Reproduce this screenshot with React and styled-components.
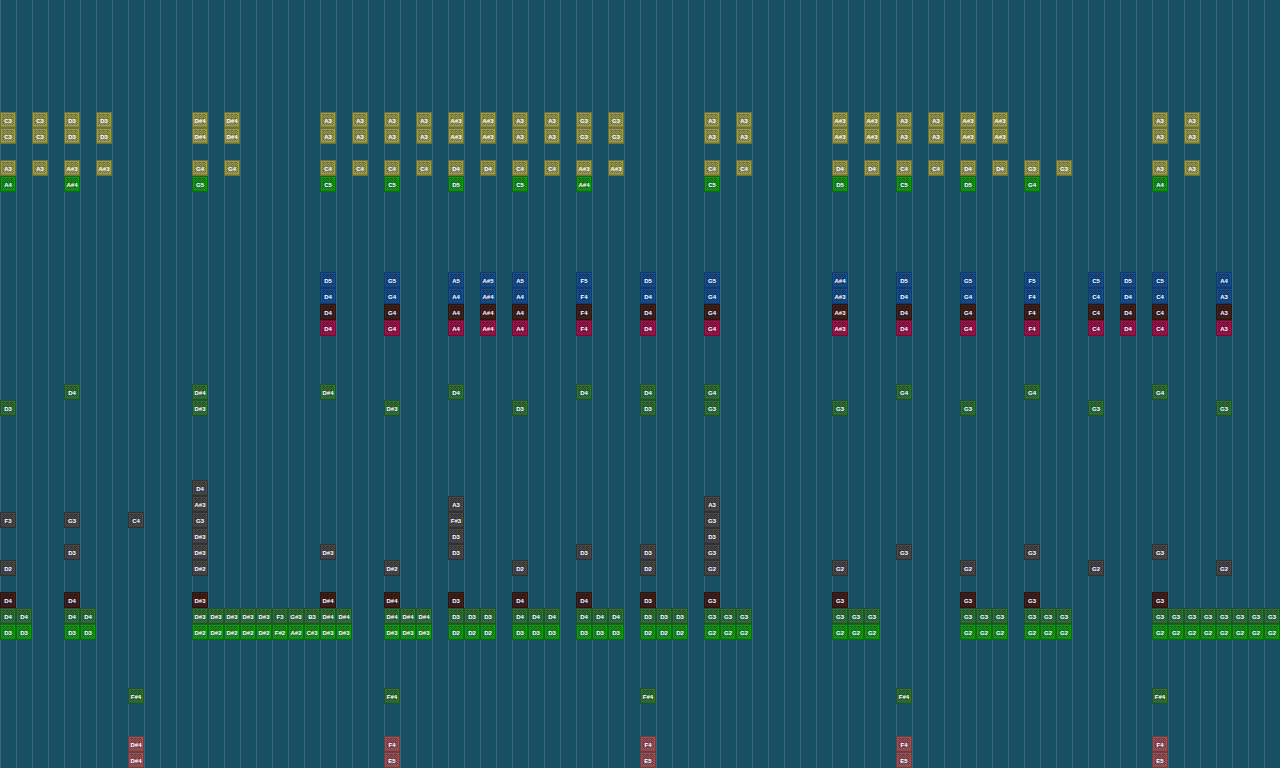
import React from 'react';
import styled, { createGlobalStyle } from 'styled-components';

const GlobalStyle = createGlobalStyle`
  * {
    box-sizing: border-box;
  }

  body {
    margin: 0;
    background: #174f63;
    overflow: hidden;
  }
`;

const Roll = styled.main`
  min-height: 100vh;
  background: repeating-linear-gradient(
    to right,
    #3a687b 0 1px,
    #174f63 1px 16px
  );
`;

const Lane = styled.div`
  display: grid;
  grid-template-columns: repeat(auto-fill, 16px);
  height: 16px;
`;

const Note = styled.span`
  grid-row: 1;
  position: relative;
  display: flex;
  align-items: center;
  justify-content: center;
  height: 16px;
  padding-top: 2px;
  background-color: ${({ $tone }) => $tone.face};
  color: #ffffff;
  font-family: 'Liberation Sans', Arial, sans-serif;
  font-size: 6px;
  font-weight: 700;
  line-height: 8px;
  white-space: nowrap;
`;

const Texture = styled.svg`
  position: absolute;
  inset: 0;
  width: 16px;
  height: 16px;
  fill: ${({ $tone }) => $tone.edge};
`;

const Label = styled.span`
  position: relative;
`;

const Defs = styled.svg`
  position: absolute;
`;

const tones = {
  olive: { face: '#9a9c46', edge: '#6f7031' },
  lime: { face: '#109a14', edge: '#0b6d10' },
  blue: { face: '#134f90', edge: '#0d3b72' },
  brown: { face: '#441e18', edge: '#2d1410' },
  pink: { face: '#a41048', edge: '#780b38' },
  green: { face: '#2c7336', edge: '#205428' },
  grey: { face: '#484848', edge: '#323232' },
  rose: { face: '#9f5053', edge: '#763b3e' },
};

const chords =
  '0:C3 2:C3 4:D3 6:D3 12:D#4 14:D#4 20:A3 22:A3 24:A3 26:A3 28:A#3 30:A#3 32:A3 34:A3 36:G3 38:G3 44:A3 46:A3 52:A#3 54:A#3 56:A3 58:A3 60:A#3 62:A#3 72:A3 74:A3';
const lead =
  '20:D4 24:G4 28:A4 30:A#4 32:A4 36:F4 40:D4 44:G4 52:A#3 56:D4 60:G4 64:F4 68:C4 70:D4 72:C4 76:A3';

// lane number -> notes, each written as column:key (or first-last:key for a run)
const lanes = {
  7: ['olive', chords],
  8: ['olive', chords],
  10: ['olive', '0:A3 2:A3 4:A#3 6:A#3 12:G4 14:G4 20:C4 22:C4 24:C4 26:C4 28:D4 30:D4 32:C4 34:C4 36:A#3 38:A#3 44:C4 46:C4 52:D4 54:D4 56:C4 58:C4 60:D4 62:D4 64:G3 66:G3 72:A3 74:A3'],
  11: ['lime', '0:A4 4:A#4 12:G5 20:C5 24:C5 28:D5 32:C5 36:A#4 44:C5 52:D5 56:C5 60:D5 64:G4 72:A4'],
  17: ['blue', '20:D5 24:G5 28:A5 30:A#5 32:A5 36:F5 40:D5 44:G5 52:A#4 56:D5 60:G5 64:F5 68:C5 70:D5 72:C5 76:A4'],
  18: ['blue', lead],
  19: ['brown', lead],
  20: ['pink', lead],
  24: ['green', '4:D4 12:D#4 20:D#4 28:D4 36:D4 40:D4 44:G4 56:G4 64:G4 72:G4'],
  25: ['green', '0:D3 12:D#3 24:D#3 32:D3 40:D3 44:G3 52:G3 60:G3 68:G3 76:G3'],
  30: ['grey', '12:D4'],
  31: ['grey', '12:A#3 28:A3 44:A3'],
  32: ['grey', '0:F3 4:G3 8:C4 12:G3 28:F#3 44:G3'],
  33: ['grey', '12:D#3 28:D3 44:D3'],
  34: ['grey', '4:D3 12:D#3 20:D#3 28:D3 36:D3 40:D3 44:G3 56:G3 64:G3 72:G3'],
  35: ['grey', '0:D2 12:D#2 24:D#2 32:D2 40:D2 44:G2 52:G2 60:G2 68:G2 76:G2'],
  37: ['brown', '0:D4 4:D4 12:D#3 20:D#4 24:D#4 28:D3 32:D4 36:D4 40:D3 44:G3 52:G3 60:G3 64:G3 72:G3'],
  38: ['green', '0-1:D4 4-5:D4 12-16:D#3 17:F3 18:G#3 19:B3 20-21:D#4 24-26:D#4 28-30:D3 32-34:D4 36-38:D4 40-42:D3 44-46:G3 52-54:G3 60-62:G3 64-66:G3 72-79:G3'],
  39: ['lime', '0-1:D3 4-5:D3 12-16:D#2 17:F#2 18:A#2 19:C#3 20-21:D#3 24-26:D#3 28-30:D2 32-34:D3 36-38:D3 40-42:D2 44-46:G2 52-54:G2 60-62:G2 64-66:G2 72-79:G2'],
  43: ['green', '8:F#4 24:F#4 40:F#4 56:F#4 72:F#4'],
  46: ['rose', '8:D#4 24:F4 40:F4 56:F4 72:F4'],
  47: ['rose', '8:D#4 24:E5 40:E5 56:E5 72:E5'],
};

const LANE_COUNT = 48;

const parseNotes = (text) =>
  text.split(' ').flatMap((item) => {
    const [range, key] = item.split(':');
    const [first, last = first] = range.split('-').map(Number);
    return Array.from({ length: last - first + 1 }, (_, i) => ({
      column: first + i,
      key,
    }));
  });

const NoteBlock = ({ column, label, tone }) => (
  <Note $tone={tone} style={{ gridColumn: column + 1 }}>
    <Texture $tone={tone} viewBox="0 0 16 16" shapeRendering="crispEdges" aria-hidden="true">
      <path d="M0 0h16v16H0zM1 1v14h14V1z" fillRule="evenodd" />
      <rect x="2" y="2" width="12" height="11" fill="url(#grain)" />
      <path d="M1 14h14v1H1z" fillOpacity="0.5" />
    </Texture>
    <Label>{label}</Label>
  </Note>
);

const App = () => (
  <>
    <GlobalStyle />
    <Roll>
      <Defs width="0" height="0" aria-hidden="true">
        <pattern id="grain" width="4" height="4" patternUnits="userSpaceOnUse">
          <path
            d="M0 0h1v1H0zM2 0h1v1H2zM1 1h1v1H1zM3 1h1v1H3zM0 2h1v1H0zM2 2h2v1H2zM1 3h1v1H1zM3 3h1v1H3z"
            fill="#000"
            fillOpacity="0.27"
          />
        </pattern>
      </Defs>
      {Array.from({ length: LANE_COUNT }, (_, index) => {
        const [tone, notes] = lanes[index] || [];
        return (
          <Lane key={index}>
            {notes &&
              parseNotes(notes).map(({ column, key }) => (
                <NoteBlock key={column} column={column} label={key} tone={tones[tone]} />
              ))}
          </Lane>
        );
      })}
    </Roll>
  </>
);

export default App;
